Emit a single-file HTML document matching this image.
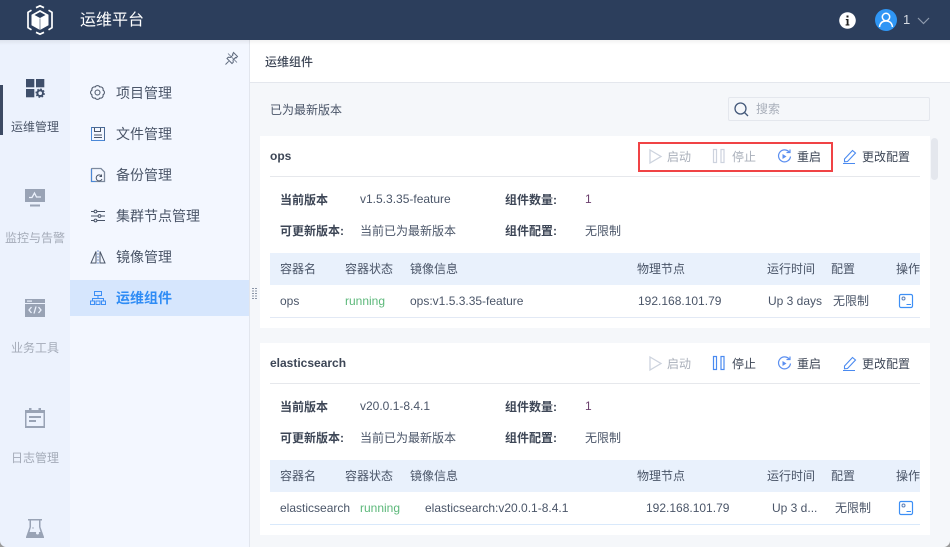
<!DOCTYPE html>
<html lang="zh"><head><meta charset="utf-8"><title>运维平台</title>
<style>
*{box-sizing:border-box;margin:0;padding:0}
html,body{width:950px;height:547px;overflow:hidden;background:#f5f7fa}
body{position:relative;font-family:"Liberation Sans","Noto Sans CJK SC",sans-serif;font-size:12px;color:#4a5568}
.a{position:absolute}
.t{position:absolute;white-space:nowrap;line-height:16px}
svg{position:absolute;overflow:visible}
.nav{position:absolute;left:0;width:70px;text-align:center;font-size:12px;line-height:16px;color:#a4abb8}
.m{position:absolute;left:116px;font-size:14px;line-height:20px;color:#4a5568;white-space:nowrap}
.b{font-weight:bold;color:#3d4656}
.g{color:#a9afba}
</style></head><body>
<!-- header -->
<div class="a" style="left:0;top:0;width:950px;height:40px;background:#2c3e5c"></div>
<svg style="left:27px;top:5px" width="26" height="30" viewBox="0 0 26 30" fill="none">
<path d="M9 2.700 13 .8l4 1.900M21.500 5.200l3.500 2.100v15.400l-3.500 2.100M17 27.300 13 29.200l-4-1.900M4.500 24.800 1 22.700V7.300l3.500-2.100" stroke="#fff" stroke-width="1.700"/>
<path d="M13 5 21.500 9.800v10.400L13 25 4.500 20.200V9.800z" fill="#fff"/>
<path d="M7.500 10 13 7l5.500 3L13 13z" fill="#2c3e5c"/>
<path d="M13 13.500V25" stroke="#2c3e5c" stroke-width=".6"/>
</svg>
<div class="t" style="left:80px;top:11px;font-size:16px;line-height:20px;color:#fff">运维平台</div>
<svg style="left:839px;top:12px" width="17" height="17" viewBox="0 0 17 17"><circle cx="8.500" cy="8.500" r="8.300" fill="#fff"/><rect x="7.500" y="3.500" width="2" height="2" fill="#222"/><path d="M6.800 7h2.700v5.400h.9V13.500H6.600v-1.100h1.100V8.100h-.9z" fill="#222"/></svg>
<svg style="left:875px;top:9px" width="22" height="22" viewBox="0 0 22 22" fill="none"><circle cx="11" cy="11" r="11" fill="#2f96f5"/><circle cx="11" cy="8" r="3.700" stroke="#fff" stroke-width="1.500"/><path d="M4.500 18c.5-4 3-6 6.500-6s6 2 6.500 6" stroke="#fff" stroke-width="1.500"/></svg>
<div class="t" style="left:903px;top:12px;color:#d5dae2;font-size:13px">1</div>
<svg style="left:917px;top:17px" width="14" height="8" fill="none"><path d="M1 1l5.500 5.500L12 1" stroke="#8f9bae" stroke-width="1.200"/></svg>
<!-- left rail -->
<div class="a" style="left:0;top:40px;width:70px;height:507px;background:#ecf2fd"></div>
<div class="a" style="left:70px;top:40px;width:180px;height:507px;background:#f3f7ff;border-right:1px solid #e2e6ee"></div>
<div class="a" style="left:0;top:40px;width:950px;height:5px;background:linear-gradient(#00000010,#0000)"></div>
<div class="a" style="left:0;top:85px;width:3px;height:50px;background:#3c4a63"></div>
<svg style="left:26px;top:79px" width="19" height="19" viewBox="0 0 19 19"><rect width="8.300" height="8.300" fill="#3f4f6b"/><rect x="10" width="8.300" height="8.300" fill="#3f4f6b"/><rect y="10" width="8.300" height="8.300" fill="#3f4f6b"/><circle cx="14.200" cy="14.200" r="2.800" fill="none" stroke="#3f4f6b" stroke-width="2"/><circle cx="14.200" cy="14.200" r="4.100" fill="none" stroke="#3f4f6b" stroke-width="1.200" stroke-dasharray="1.700 1.500"/></svg>
<div class="nav" style="top:119px;color:#4a5568">运维管理</div>
<svg style="left:25px;top:189px" width="20" height="18" viewBox="0 0 20 18"><rect width="20" height="13" fill="#99a3b5"/><path d="M4 8.500h3L9.500 4l2 4H16" stroke="#ecf2fd" stroke-width="1.300" fill="none"/><rect x="5" y="15.500" width="10" height="2" fill="#99a3b5"/></svg>
<div class="nav" style="top:230px">监控与告警</div>
<svg style="left:25px;top:299px" width="20" height="18" viewBox="0 0 20 18"><rect width="20" height="18" fill="#99a3b5"/><rect y="4" width="20" height="1" fill="#ecf2fd"/><rect x="2" y="1.500" width="5" height="1.200" fill="#ecf2fd"/><path d="M6.500 8 4 11l2.500 3M13.500 8l2.500 3-2.500 3M11 7.500 9 14.500" stroke="#ecf2fd" stroke-width="1.300" fill="none"/></svg>
<div class="nav" style="top:340px">业务工具</div>
<svg style="left:25px;top:408px" width="20" height="20" viewBox="0 0 20 20"><path d="M0 2h4V0h2.500v2h7V0H16v2h4v18H0z" fill="#99a3b5"/><rect x="1.500" y="5" width="17" height="13" fill="#ecf2fd"/><rect x="4" y="8" width="12" height="2" fill="#99a3b5"/><rect x="4" y="12" width="7" height="2" fill="#99a3b5"/></svg>
<div class="nav" style="top:450px">日志管理</div>
<svg style="left:26px;top:518px" width="18" height="20" viewBox="0 0 18 20"><path d="M2 1h14v1.500h-1.500V9L18 19v1H0v-1L3.500 9V2.500H2z" fill="#99a3b5"/><path d="M5 2.500h8V9l1.500 5h-11L5 9z" fill="#ecf2fd"/><circle cx="11.500" cy="15" r="1.500" fill="#ecf2fd"/><circle cx="7" cy="10" r=".7" fill="#99a3b5"/></svg>
<!-- submenu -->
<svg style="left:225px;top:52px" width="13" height="13" viewBox="0 0 13 13" fill="none" stroke="#5f6b7e"><path d="M8.500 .5l4 4-1.500 1.500-.5-.5-2.500 2.500.3 2.200-1.300 1.300L2 6.500 3.300 5.200l2.200.3L8 3l-.5-.5zM.5 12.500l3.200-3.200"/><path d="M3 1.500l9 9" stroke-width=".7"/></svg>
<svg style="left:90px;top:85px" width="15" height="15" viewBox="0 0 15 15" fill="none" stroke="#4a5568" stroke-width="1"><path d="M13.040 5.200A2.600 2.600 0 0 1 13.040 9.800 2.600 2.600 0 0 1 9.800 13.040 2.600 2.600 0 0 1 5.200 13.040 2.600 2.600 0 0 1 1.960 9.800 2.600 2.600 0 0 1 1.960 5.200 2.600 2.600 0 0 1 5.200 1.960 2.600 2.600 0 0 1 9.800 1.960 2.600 2.600 0 0 1 13.040 5.200z"/><circle cx="7.500" cy="7.500" r="2.500"/></svg>
<div class="m" style="top:83px">项目管理</div>
<svg style="left:91px;top:127px" width="14" height="14" viewBox="0 0 14 14" fill="none"><rect x=".5" y=".5" width="13" height="13" stroke="#4a6a96"/><path d="M3.500 1v3.500h6V1" stroke="#4a5568"/><path d="M3 8h8M3 10.500h8" stroke="#4a5568"/><path d="M.5 .5v13h13" stroke="#4a88d8"/></svg>
<div class="m" style="top:124px">文件管理</div>
<svg style="left:91px;top:168px" width="14" height="14" viewBox="0 0 14 14" fill="none"><path d="M.5 13.500V1a.5.500 0 0 1 .5-.5h9L13.500 4v9.500z" stroke="#7d8a9e" stroke-width="1.300"/><path d="M.5 1v12.500h4" stroke="#4a88d8"/><path d="M10.500 8a3 3 0 1 0 .5 3" stroke="#4a5568"/><path d="M10.500 6.500V8.500H8.500" stroke="#4a5568"/></svg>
<div class="m" style="top:165px">备份管理</div>
<svg style="left:91px;top:209px" width="14" height="14" viewBox="0 0 14 14" fill="none" stroke="#4a5568"><path d="M0 2.500h3M6 2.500h8M0 7h7M10 7h4M0 11.500h3M6 11.500h8"/><circle cx="4.500" cy="2.500" r="1.400"/><circle cx="8.500" cy="7" r="1.400"/><circle cx="4.500" cy="11.500" r="1.400"/></svg>
<div class="m" style="top:206px">集群节点管理</div>
<svg style="left:90px;top:250px" width="16" height="14" viewBox="0 0 16 14" fill="none"><path d="M6 1.500 1 13h5zM10 1.500 15 13h-5z" stroke="#4a5568"/><path d="M8 0v14" stroke="#7b9ad0" stroke-dasharray="2 1"/></svg>
<div class="m" style="top:247px">镜像管理</div>
<div class="a" style="left:70px;top:280px;width:179px;height:36px;background:#d6e6fd"></div>
<svg style="left:90px;top:291px" width="16" height="14" viewBox="0 0 16 14" fill="none" stroke="#3d8ff5"><rect x="4.500" y=".5" width="7" height="4"/><path d="M8 4.500v3M2.500 10V7.500h11V10"/><rect x=".5" y="10" width="4" height="3.500"/><rect x="6" y="10" width="4" height="3.500"/><rect x="11.500" y="10" width="4" height="3.500"/></svg>
<div class="m" style="top:288px;color:#2f8cf5;font-weight:bold">运维组件</div>
<svg style="left:252px;top:288px" width="6" height="12" fill="#8a94a6"><path d="M0 0h2v1H0zM3 0h2v1H3zM0 2.500h2v1H0zM3 2.500h2v1H3zM0 5h2v1H0zM3 5h2v1H3zM0 7.500h2v1H0zM3 7.500h2v1H3zM0 10h2v1H0zM3 10h2v1H3z"/></svg>
<!-- main header -->
<div class="a" style="left:250px;top:40px;width:700px;height:43px;background:#fff;border-bottom:1px solid #e4e7ed"></div>
<div class="a" style="left:250px;top:40px;width:700px;height:5px;background:linear-gradient(#0000000c,#0000)"></div>
<div class="t" style="left:265px;top:54px;color:#3d4656;font-weight:500">运维组件</div>
<div class="t" style="left:270px;top:102px">已为最新版本</div>
<div class="a" style="left:728px;top:97px;width:202px;height:24px;background:#f5f7fa;border:1px solid #e4e7ed;border-radius:2px"></div>
<svg style="left:734px;top:102px" width="15" height="15" fill="none" stroke="#44597a" stroke-width="1.300"><circle cx="6.500" cy="6.500" r="5.500"/><path d="M10.500 10.500l3.500 3.500"/></svg>
<div class="t g" style="left:756px;top:101px">搜索</div>
<!-- card 1 -->
<div class="a" style="left:260px;top:136px;width:670px;height:192px;background:#fff"></div>
<div class="a" style="left:931px;top:138px;width:7px;height:42px;background:#e4e7ed;border-radius:4px"></div>
<div class="t b" style="left:270px;top:148px">ops</div>
<div class="a" style="left:270px;top:176px;width:650px;height:1px;background:#e6e8ec"></div>
<div class="a" style="left:638px;top:142px;width:195px;height:30px;border:2px solid #f04345"></div>
<svg style="left:649px;top:149px" width="14" height="15" fill="none" stroke="#cdd3de" stroke-width="1.300"><path d="M1 1l11 6.500L1 14z"/></svg>
<div class="t g" style="left:667px;top:149px">启动</div>
<svg style="left:713px;top:149px" width="12" height="15" fill="none" stroke="#cdd3de" stroke-width="1.200"><rect x=".5" y=".5" width="3" height="13"/><rect x="8" y=".5" width="3" height="13"/></svg>
<div class="t g" style="left:732px;top:149px">停止</div>
<svg style="left:777px;top:149px" width="15" height="15" fill="none" stroke="#5b8ff0" stroke-width="1.200"><path d="M12.500 3.500A6 6 0 1 0 13.500 7.500"/><path d="M9.500 3.500h3.500V.5"/><path d="M5.500 5l4 2.500-4 2.500z" fill="#5b8ff0" stroke="none"/></svg>
<div class="t" style="left:797px;top:149px;color:#3d4656">重启</div>
<svg style="left:843px;top:149px" width="14" height="15" fill="none" stroke="#4a8af0"><path d="M1.500 10 9.500 1.500l3 2.500-8 8.500-3 .3z" stroke-width="1.100"/><path d="M0 14.500h12"/></svg>
<div class="t" style="left:862px;top:149px;color:#3d4656">更改配置</div>
<div class="t b" style="left:280px;top:192px">当前版本</div>
<div class="t" style="left:360px;top:191px">v1.5.3.35-feature</div>
<div class="t b" style="left:505px;top:192px">组件数量:</div>
<div class="t" style="left:585px;top:191px;color:#6b3f6d">1</div>
<div class="t b" style="left:280px;top:223px">可更新版本:</div>
<div class="t" style="left:360px;top:223px">当前已为最新版本</div>
<div class="t b" style="left:505px;top:223px">组件配置:</div>
<div class="t" style="left:585px;top:223px">无限制</div>
<div class="a" style="left:270px;top:253px;width:650px;height:32px;background:#e9f1fc"></div>
<div class="t" style="left:280px;top:261px">容器名</div>
<div class="t" style="left:345px;top:261px">容器状态</div>
<div class="t" style="left:410px;top:261px">镜像信息</div>
<div class="t" style="left:637px;top:261px">物理节点</div>
<div class="t" style="left:767px;top:261px">运行时间</div>
<div class="t" style="left:831px;top:261px">配置</div>
<div class="t" style="left:896px;top:261px;width:24px;overflow:hidden">操作</div>
<div class="t" style="left:280px;top:293px">ops</div>
<div class="t" style="left:345px;top:293px;color:#5cb87a">running</div>
<div class="t" style="left:410px;top:293px">ops:v1.5.3.35-feature</div>
<div class="t" style="left:638px;top:293px">192.168.101.79</div>
<div class="t" style="left:768px;top:293px">Up 3 days</div>
<div class="t" style="left:833px;top:293px">无限制</div>
<svg style="left:899px;top:294px" width="14" height="14" fill="none"><rect x=".5" y=".5" width="13" height="13" rx="1.500" stroke="#3d8ff5" stroke-width="1.200"/><circle cx="4.500" cy="4.500" r="1.500" stroke="#5a7fb8"/><path d="M7.500 10.500h4.500" stroke="#3d8ff5"/></svg>
<div class="a" style="left:270px;top:317px;width:650px;height:1px;background:#e2e9f5"></div>
<!-- card 2 -->
<div class="a" style="left:260px;top:343px;width:670px;height:192px;background:#fff"></div>
<div class="t b" style="left:270px;top:355px">elasticsearch</div>
<div class="a" style="left:270px;top:383px;width:650px;height:1px;background:#e6e8ec"></div>
<svg style="left:649px;top:356px" width="14" height="15" fill="none" stroke="#cdd3de" stroke-width="1.300"><path d="M1 1l11 6.500L1 14z"/></svg>
<div class="t g" style="left:667px;top:356px">启动</div>
<svg style="left:713px;top:356px" width="12" height="15" fill="none" stroke="#4a8af0" stroke-width="1.200"><rect x=".5" y=".5" width="3" height="13"/><rect x="8" y=".5" width="3" height="13"/></svg>
<div class="t" style="left:732px;top:356px;color:#3d4656">停止</div>
<svg style="left:777px;top:356px" width="15" height="15" fill="none" stroke="#5b8ff0" stroke-width="1.200"><path d="M12.500 3.500A6 6 0 1 0 13.500 7.500"/><path d="M9.500 3.500h3.500V.5"/><path d="M5.500 5l4 2.500-4 2.500z" fill="#5b8ff0" stroke="none"/></svg>
<div class="t" style="left:797px;top:356px;color:#3d4656">重启</div>
<svg style="left:843px;top:356px" width="14" height="15" fill="none" stroke="#4a8af0"><path d="M1.500 10 9.500 1.500l3 2.500-8 8.500-3 .3z" stroke-width="1.100"/><path d="M0 14.500h12"/></svg>
<div class="t" style="left:862px;top:356px;color:#3d4656">更改配置</div>
<div class="t b" style="left:280px;top:399px">当前版本</div>
<div class="t" style="left:360px;top:398px">v20.0.1-8.4.1</div>
<div class="t b" style="left:505px;top:399px">组件数量:</div>
<div class="t" style="left:585px;top:398px;color:#6b3f6d">1</div>
<div class="t b" style="left:280px;top:430px">可更新版本:</div>
<div class="t" style="left:360px;top:430px">当前已为最新版本</div>
<div class="t b" style="left:505px;top:430px">组件配置:</div>
<div class="t" style="left:585px;top:430px">无限制</div>
<div class="a" style="left:270px;top:460px;width:650px;height:32px;background:#e9f1fc"></div>
<div class="t" style="left:280px;top:468px">容器名</div>
<div class="t" style="left:345px;top:468px">容器状态</div>
<div class="t" style="left:410px;top:468px">镜像信息</div>
<div class="t" style="left:637px;top:468px">物理节点</div>
<div class="t" style="left:767px;top:468px">运行时间</div>
<div class="t" style="left:831px;top:468px">配置</div>
<div class="t" style="left:896px;top:468px;width:24px;overflow:hidden">操作</div>
<div class="t" style="left:280px;top:500px">elasticsearch</div>
<div class="t" style="left:360px;top:500px;color:#5cb87a">running</div>
<div class="t" style="left:425px;top:500px">elasticsearch:v20.0.1-8.4.1</div>
<div class="t" style="left:646px;top:500px">192.168.101.79</div>
<div class="t" style="left:772px;top:500px">Up 3 d...</div>
<div class="t" style="left:835px;top:500px">无限制</div>
<svg style="left:899px;top:501px" width="14" height="14" fill="none"><rect x=".5" y=".5" width="13" height="13" rx="1.500" stroke="#3d8ff5" stroke-width="1.200"/><circle cx="4.500" cy="4.500" r="1.500" stroke="#5a7fb8"/><path d="M7.500 10.500h4.500" stroke="#3d8ff5"/></svg>
<div class="a" style="left:270px;top:524px;width:650px;height:1px;background:#d9e9fb"></div>
<!-- window corners -->
<svg style="left:0;top:541px" width="6" height="6"><path d="M0 0c0 3 3 6 6 6H0z" fill="#9a9a9a"/></svg>
<svg style="left:944px;top:541px" width="6" height="6"><path d="M6 0c0 3-3 6-6 6h6z" fill="#9a9a9a"/></svg>
</body></html>
